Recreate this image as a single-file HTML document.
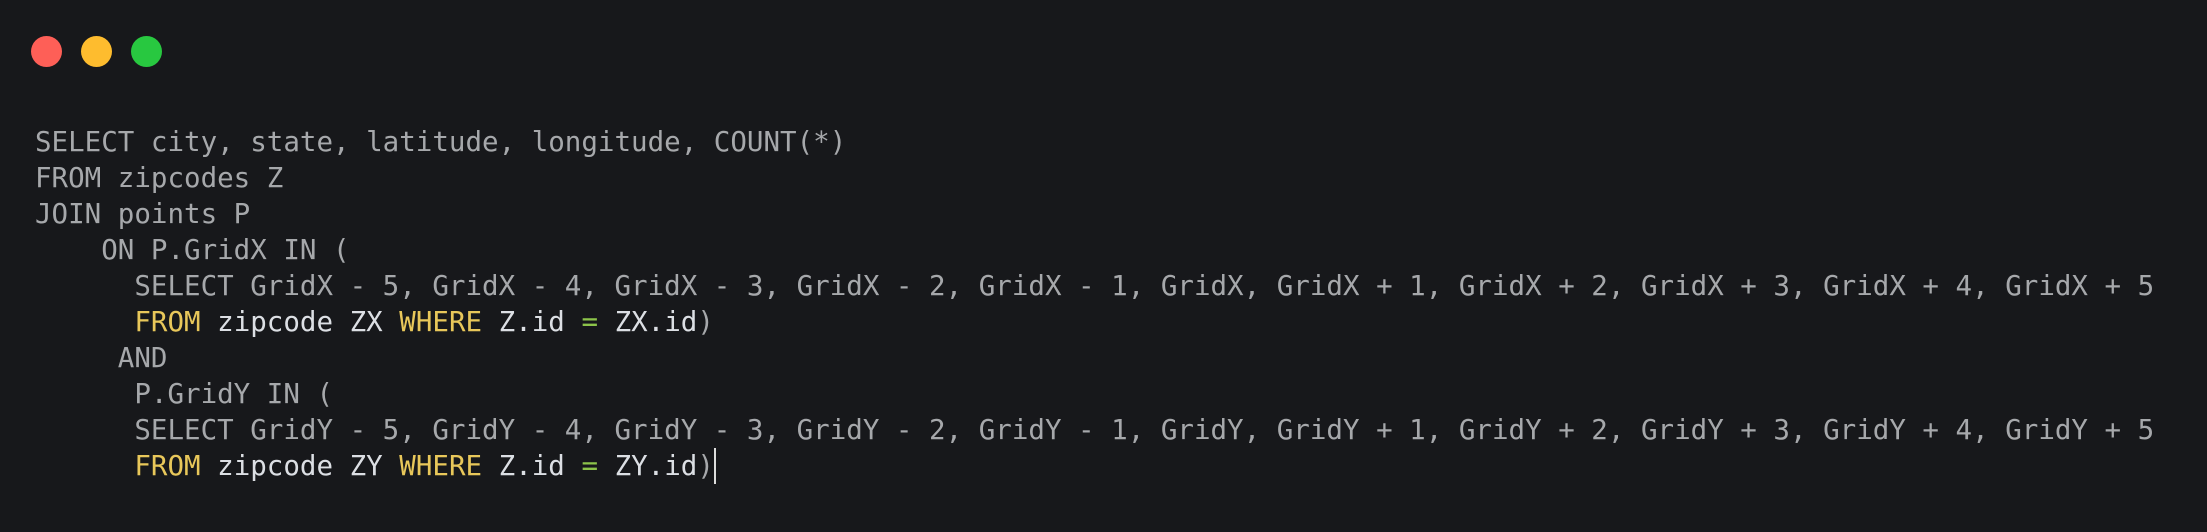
<!DOCTYPE html>
<html><head><style>
html,body{margin:0;padding:0;width:2207px;height:532px;background:#17181b;overflow:hidden}
.d{position:absolute;top:36px;width:31px;height:31px;border-radius:50%}
pre{position:absolute;left:35px;top:124px;margin:0;font-family:"DejaVu Sans Mono","Liberation Mono",monospace;font-size:27.5px;line-height:36px;color:#a6a8ab}
.k{color:#e8c75a}.w{color:#dcdfe4}.g{color:#8cc34a}
.c{display:inline-block;width:2px;height:36px;background:#ddd;vertical-align:top}
</style></head><body>
<div class="d" style="left:31px;background:#fe5f57"></div>
<div class="d" style="left:81px;background:#febc2e"></div>
<div class="d" style="left:131px;background:#28c840"></div>
<pre>SELECT city, state, latitude, longitude, COUNT(*)
FROM zipcodes Z
JOIN points P
    ON P.GridX IN (
      SELECT GridX - 5, GridX - 4, GridX - 3, GridX - 2, GridX - 1, GridX, GridX + 1, GridX + 2, GridX + 3, GridX + 4, GridX + 5
      <span class="k">FROM</span> <span class="w">zipcode ZX</span> <span class="k">WHERE</span> <span class="w">Z.id</span> <span class="g">=</span> <span class="w">ZX.id</span>)
     AND
      P.GridY IN (
      SELECT GridY - 5, GridY - 4, GridY - 3, GridY - 2, GridY - 1, GridY, GridY + 1, GridY + 2, GridY + 3, GridY + 4, GridY + 5
      <span class="k">FROM</span> <span class="w">zipcode ZY</span> <span class="k">WHERE</span> <span class="w">Z.id</span> <span class="g">=</span> <span class="w">ZY.id</span>)<span class="c"></span></pre>
</body></html>
